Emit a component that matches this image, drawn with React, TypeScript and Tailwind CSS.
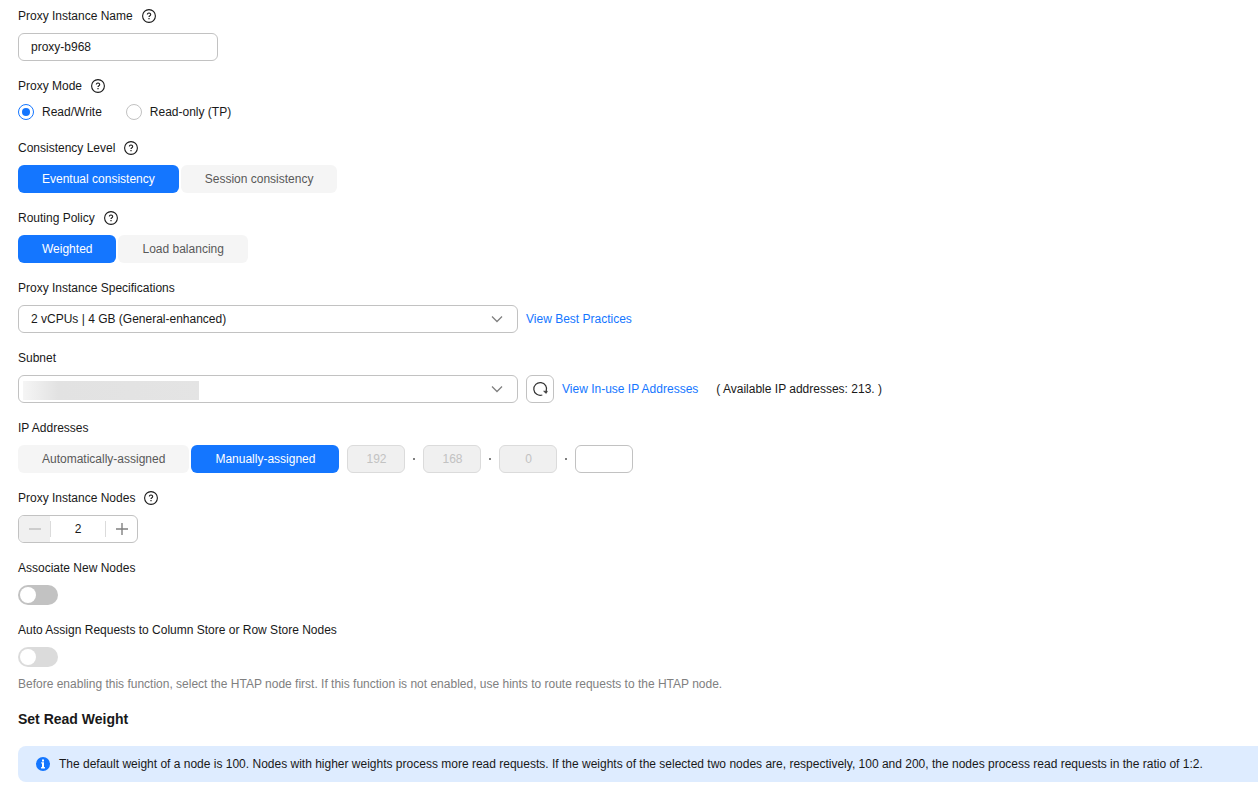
import { useState, type ReactNode } from 'react';
import clsx from 'clsx';

const HelpIcon = () => (
  <svg viewBox="0 0 14 14" className="size-3.5" fill="none" stroke="currentColor" aria-hidden="true">
    <circle cx="7" cy="7" r="6.4" strokeWidth="1.1" />
    <path d="M5.3 5.5a1.7 1.5 0 1 1 2.6 1.3c-.6.4-.9.6-.9 1.3" strokeWidth="1.1" />
    <path d="M7 9.1v1.2" strokeWidth="1.2" />
  </svg>
);

const ChevronIcon = () => (
  <svg
    viewBox="0 0 12 12"
    className="pointer-events-none absolute right-[15px] top-2 size-3"
    fill="none"
    stroke="#808080"
    strokeWidth="1.3"
    aria-hidden="true"
  >
    <path d="M1 3.5l5 5 5-5" />
  </svg>
);

const RefreshIcon = () => (
  <svg viewBox="0 0 16 16" className="size-4" fill="none" stroke="#333" strokeWidth="1.2" aria-hidden="true">
    <path d="M10.3 14A6.4 6.4 0 1 1 14.2 10.2" />
    <path d="M11.6 10.2h3.8l-1.2 2.2z" fill="#333" strokeWidth=".6" />
  </svg>
);

const InfoIcon = () => (
  <svg viewBox="0 0 14 14" className="size-3.5 shrink-0" aria-hidden="true">
    <circle cx="7" cy="7" r="7" fill="#1476ff" />
    <path d="M6 2.5h2v1.9H6zM5.2 5.2H8v4.9h.9v1.3H5.1v-1.3H6V6.5h-.8z" fill="#fff" />
  </svg>
);

type FieldProps = {
  label: string;
  htmlFor?: string;
  help?: boolean;
  children: ReactNode;
};

const Field = ({ label, htmlFor, help, children }: FieldProps) => (
  <div className="flex flex-col gap-2">
    <div className="flex items-center gap-[9px] leading-[18px]">
      {htmlFor ? <label htmlFor={htmlFor}>{label}</label> : <span>{label}</span>}
      {help && (
        <button type="button" aria-label={`About ${label}`}>
          <HelpIcon />
        </button>
      )}
    </div>
    {children}
  </div>
);

type SegmentedProps = {
  label: string;
  options: string[];
  value: string;
  onChange: (value: string) => void;
};

const Segmented = ({ label, options, value, onChange }: SegmentedProps) => (
  <div role="group" aria-label={label} className="flex gap-0.5">
    {options.map((option) => (
      <button
        key={option}
        type="button"
        aria-pressed={option === value}
        onClick={() => onChange(option)}
        className={clsx(
          'h-7 rounded-md px-6 whitespace-nowrap',
          option === value ? 'bg-[#1476ff] text-white' : 'bg-[#f5f5f5] text-[#595959]'
        )}
      >
        {option}
      </button>
    ))}
  </div>
);

const modes = ['Read/Write', 'Read-only (TP)'];
const octets = ['192', '168', '0'];

const selectClass = 'h-7 w-full appearance-none rounded-md border border-[#c2c2c2] bg-white pl-3 pr-9';
const switchClass =
  'block h-5 w-10 appearance-none rounded-full bg-[#c2c2c2] p-0.5 before:block before:size-4 before:rounded-full before:bg-white checked:bg-[#1476ff] checked:before:ml-5 disabled:bg-[#dbdbdb]';

const App = () => {
  const [name, setName] = useState('proxy-b968');
  const [mode, setMode] = useState(modes[0]);
  const [consistency, setConsistency] = useState('Eventual consistency');
  const [routing, setRouting] = useState('Weighted');
  const [assignment, setAssignment] = useState('Manually-assigned');
  const [nodes, setNodes] = useState(2);

  return (
    <main className="overflow-hidden bg-white pt-[7px] pb-5 pl-[18px] font-['Liberation_Sans',Arial,sans-serif] text-xs text-[#191919]">
      <form className="flex flex-col gap-4" onSubmit={(e) => e.preventDefault()}>
        <Field label="Proxy Instance Name" htmlFor="name" help>
          <input
            id="name"
            type="text"
            value={name}
            onChange={(e) => setName(e.target.value)}
            className="h-7 w-50 rounded-md border border-[#c2c2c2] px-3"
          />
        </Field>

        <Field label="Proxy Mode" help>
          <div role="radiogroup" aria-label="Proxy Mode" className="flex gap-6 pb-0.5 leading-[18px]">
            {modes.map((item) => (
              <label key={item} className="flex items-center gap-2">
                <input
                  type="radio"
                  name="mode"
                  checked={mode === item}
                  onChange={() => setMode(item)}
                  className="flex size-4 appearance-none items-center justify-center rounded-full border border-[#c2c2c2] before:size-2 before:rounded-full checked:border-[#1476ff] checked:before:bg-[#1476ff]"
                />
                {item}
              </label>
            ))}
          </div>
        </Field>

        <Field label="Consistency Level" help>
          <Segmented
            label="Consistency Level"
            options={['Eventual consistency', 'Session consistency']}
            value={consistency}
            onChange={setConsistency}
          />
        </Field>

        <Field label="Routing Policy" help>
          <Segmented
            label="Routing Policy"
            options={['Weighted', 'Load balancing']}
            value={routing}
            onChange={setRouting}
          />
        </Field>

        <Field label="Proxy Instance Specifications" htmlFor="spec">
          <div className="flex items-center gap-2">
            <div className="relative w-125">
              <select id="spec" className={selectClass}>
                <option>2 vCPUs | 4 GB (General-enhanced)</option>
              </select>
              <ChevronIcon />
            </div>
            <a href="#best-practices" className="text-[#1476ff]">View Best Practices</a>
          </div>
        </Field>

        <Field label="Subnet" htmlFor="subnet">
          <div className="flex items-center gap-2">
            <div className="relative w-125">
              <select id="subnet" className={selectClass}>
                <option></option>
              </select>
              {/* masked subnet name */}
              <div className="pointer-events-none absolute top-1.5 left-[5px] h-[19px] w-44 bg-linear-to-r from-[#f5f5f5] via-[#e2e2e2] via-20% to-[#e4e4e4]" />
              <ChevronIcon />
            </div>
            <button
              type="button"
              aria-label="Refresh"
              className="flex size-7 items-center justify-center rounded-md border border-[#c2c2c2]"
            >
              <RefreshIcon />
            </button>
            <a href="#in-use" className="text-[#1476ff]">View In-use IP Addresses</a>
            <span className="pl-2.5">( Available IP addresses: 213. )</span>
          </div>
        </Field>

        <Field label="IP Addresses">
          <div className="flex items-center gap-2">
            <Segmented
              label="IP Addresses"
              options={['Automatically-assigned', 'Manually-assigned']}
              value={assignment}
              onChange={setAssignment}
            />
            <div className="flex items-center gap-2">
              {octets.map((octet, i) => (
                <div key={i} className="flex items-center gap-2">
                  <input
                    type="text"
                    disabled
                    value={octet}
                    aria-label={`IP part ${i + 1}`}
                    className="h-7 w-[58px] rounded-md border border-[#dbdbdb] bg-[#f0f0f0] text-center text-[#c2c2c2]"
                  />
                  <span className="size-0.5 bg-[#808080]" />
                </div>
              ))}
              <input
                type="text"
                aria-label="IP part 4"
                className="h-7 w-[58px] rounded-md border border-[#c2c2c2] text-center"
              />
            </div>
          </div>
        </Field>

        <Field label="Proxy Instance Nodes" htmlFor="nodes" help>
          <div className="flex h-7 w-30 items-center overflow-hidden rounded-md border border-[#c2c2c2]">
            <button
              type="button"
              aria-label="Decrease"
              disabled={nodes <= 2}
              onClick={() => setNodes(nodes - 1)}
              className="flex h-full w-[31px] items-center justify-center bg-[#f0f0f0] text-[#c2c2c2]"
            >
              <svg viewBox="0 0 12 12" className="size-3" stroke="currentColor" strokeWidth="1.4">
                <path d="M0 6h12" />
              </svg>
            </button>
            <input
              id="nodes"
              type="text"
              inputMode="numeric"
              value={nodes}
              onChange={(e) => setNodes(Number(e.target.value) || 2)}
              className="h-4 w-14 min-w-0 border-x border-[#dbdbdb] text-center"
            />
            <button
              type="button"
              aria-label="Increase"
              onClick={() => setNodes(nodes + 1)}
              className="flex h-full flex-1 items-center justify-center text-[#808080]"
            >
              <svg viewBox="0 0 12 12" className="size-3" stroke="currentColor" strokeWidth="1.4">
                <path d="M0 6h12M6 0v12" />
              </svg>
            </button>
          </div>
        </Field>

        <Field label="Associate New Nodes" htmlFor="associate">
          <input id="associate" type="checkbox" role="switch" className={switchClass} />
        </Field>

        <Field label="Auto Assign Requests to Column Store or Row Store Nodes" htmlFor="auto-assign">
          <input id="auto-assign" type="checkbox" role="switch" disabled className={switchClass} />
          <p className="leading-[18px] text-[#808080]">
            Before enabling this function, select the HTAP node first. If this function is not enabled, use hints to
            route requests to the HTAP node.
          </p>
        </Field>

        <h2 className="text-sm leading-[21px] font-bold">Set Read Weight</h2>

        <div className="flex items-center gap-[9px] rounded-l-lg bg-[#deecff] py-[9px] pr-4 pl-[18px] leading-[18px]">
          <InfoIcon />
          <p>
            The default weight of a node is 100. Nodes with higher weights process more read requests. If the weights of
            the selected two nodes are, respectively, 100 and 200, the nodes process read requests in the ratio of 1:2.
          </p>
        </div>
      </form>
    </main>
  );
};

export default App;
